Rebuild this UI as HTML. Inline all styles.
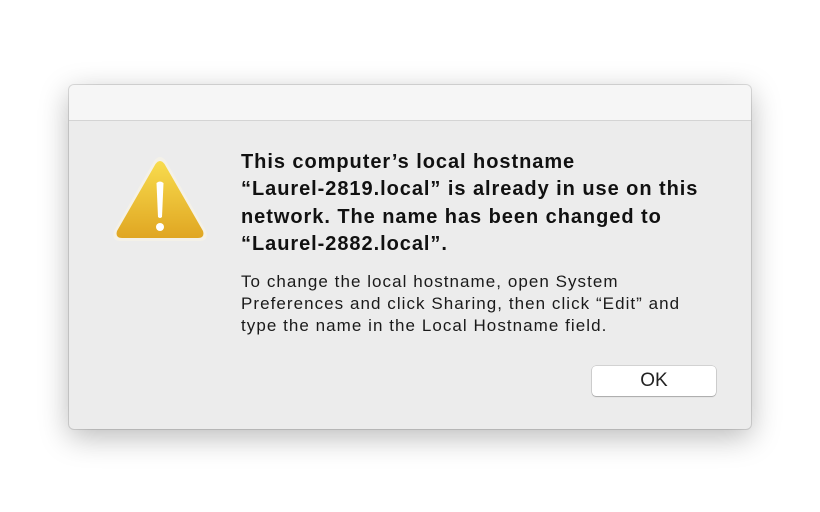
<!DOCTYPE html>
<html><head><style>
body{margin:0;width:820px;height:512px;background:#fff;position:relative;overflow:hidden;font-family:"Liberation Sans",sans-serif;}
.win{position:absolute;left:69px;top:85px;width:682px;height:344px;border-radius:5px;background:#ececec;box-shadow:0 8px 30px rgba(0,0,0,0.28),0 0 0 1px rgba(0,0,0,0.12);overflow:hidden;}
.tb{height:35px;background:#f6f6f6;border-bottom:1px solid #d4d4d4;}
.h{position:absolute;left:172px;top:64px;font-weight:bold;font-size:20px;letter-spacing:0.95px;line-height:27.3px;color:#111;white-space:nowrap;}
.p{position:absolute;left:172px;top:186px;font-size:17px;letter-spacing:1.05px;line-height:22px;color:#1a1a1a;white-space:nowrap;}
.btn{position:absolute;left:523px;top:281px;width:124px;height:30px;background:#fff;border-radius:4px;box-shadow:0 0 0 0.5px rgba(0,0,0,0.22),0 1px 1px rgba(0,0,0,0.2);font-size:19px;text-align:center;line-height:30px;color:#222;}
svg{position:absolute;left:42px;top:70px;}
</style></head><body>
<div class="win"><div class="tb"></div>
<svg width="98" height="90" viewBox="0 0 98 90">
<defs><linearGradient id="g" x1="0" y1="0" x2="0" y2="1"><stop offset="0" stop-color="#f8dc4e"/><stop offset="1" stop-color="#e0a622"/></linearGradient></defs>
<path d="M43 6 Q49 -2 55 6 L95 76 Q98 86 88 86 L10 86 Q0 86 3 76 Z" fill="#f4f1e8"/>
<path d="M44.5 9 Q49 3 53.5 9 L92 76 Q94 83 87 83 L11 83 Q4 83 6 76 Z" fill="url(#g)"/>
<path d="M45.5 28 Q49 25 52.5 28 L51 62 Q49 64 47 62 Z" fill="#fff"/>
<circle cx="49" cy="72" r="4" fill="#fff"/>
</svg>
<div class="h">This computer’s local hostname<br>“Laurel-2819.local” is already in use on this<br>network. The name has been changed to<br>“Laurel-2882.local”.</div>
<div class="p">To change the local hostname, open System<br>Preferences and click Sharing, then click “Edit” and<br>type the name in the Local Hostname field.</div>
<div class="btn">OK</div>
</div>
</body></html>
